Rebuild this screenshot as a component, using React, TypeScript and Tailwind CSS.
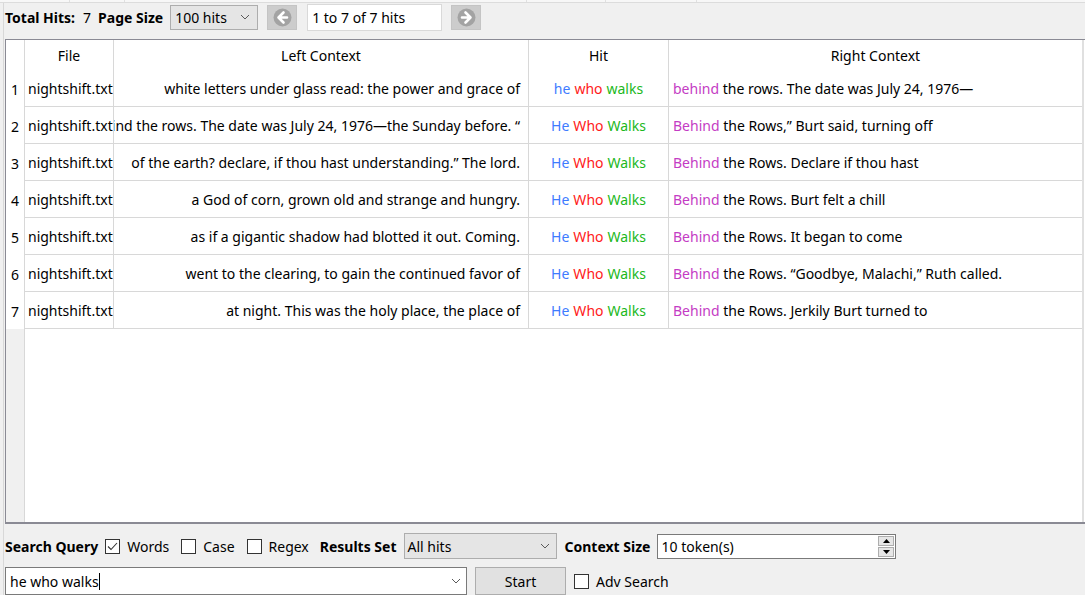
import React from 'react';

type Hit = {
  left: string;
  hit: [string, string, string];
  behind: string;
  right: string;
};

const hits: Hit[] = [
  {
    left: 'white letters under glass read: the power and grace of',
    hit: ['he', 'who', 'walks'],
    behind: 'behind',
    right: ' the rows. The date was July 24, 1976—',
  },
  {
    left: 'behind the rows. The date was July 24, 1976—the Sunday before. “',
    hit: ['He', 'Who', 'Walks'],
    behind: 'Behind',
    right: ' the Rows,” Burt said, turning off',
  },
  {
    left: 'of the earth? declare, if thou hast understanding.” The lord.',
    hit: ['He', 'Who', 'Walks'],
    behind: 'Behind',
    right: ' the Rows. Declare if thou hast',
  },
  {
    left: 'a God of corn, grown old and strange and hungry.',
    hit: ['He', 'Who', 'Walks'],
    behind: 'Behind',
    right: ' the Rows. Burt felt a chill',
  },
  {
    left: 'as if a gigantic shadow had blotted it out. Coming.',
    hit: ['He', 'Who', 'Walks'],
    behind: 'Behind',
    right: ' the Rows. It began to come',
  },
  {
    left: 'went to the clearing, to gain the continued favor of',
    hit: ['He', 'Who', 'Walks'],
    behind: 'Behind',
    right: ' the Rows. “Goodbye, Malachi,” Ruth called.',
  },
  {
    left: 'at night. This was the holy place, the place of',
    hit: ['He', 'Who', 'Walks'],
    behind: 'Behind',
    right: ' the Rows. Jerkily Burt turned to',
  },
];

const Chevron = () => (
  <svg width="10" height="6" viewBox="0 0 10 6" className="shrink-0">
    <path d="M1 1 L5 5 L9 1" fill="none" stroke="#5a5a5a" strokeWidth="1" />
  </svg>
);

const ArrowButton = ({ dir }: { dir: 'left' | 'right' }) => (
  <button className="w-[30px] h-[25px] bg-[#cccccc] border border-[#c4c4c4] flex items-center justify-center">
    <svg width="19" height="19" viewBox="0 0 19 19">
      <circle cx="9.5" cy="9.5" r="9" fill="#a3a3a3" />
      {dir === 'left' ? (
        <path d="M10.5 4.5 L5.5 9.5 L10.5 14.5 M5.8 9.5 H14" fill="none" stroke="#fff" strokeWidth="2.6" strokeLinecap="round" strokeLinejoin="round" />
      ) : (
        <path d="M8.5 4.5 L13.5 9.5 L8.5 14.5 M13.2 9.5 H5" fill="none" stroke="#fff" strokeWidth="2.6" strokeLinecap="round" strokeLinejoin="round" />
      )}
    </svg>
  </button>
);

const CheckBox = ({ checked, label }: { checked?: boolean; label: string }) => (
  <label className="flex items-center gap-[7px]">
    <span className="w-[15px] h-[15px] border border-[#333] bg-white flex items-center justify-center">
      {checked && (
        <svg width="11" height="9" viewBox="0 0 11 9">
          <path d="M1 4.5 L4 7.5 L10 1" fill="none" stroke="#333" strokeWidth="1.1" />
        </svg>
      )}
    </span>
    <span>{label}</span>
  </label>
);

const App: React.FC = () => {
  return (
    <div
      className="w-[1085px] h-[595px] bg-[#f0f0f0] text-[14px] text-black overflow-hidden flex flex-col"
      style={{ fontFamily: '"Noto Sans", "Open Sans", sans-serif' }}
    >
      {/* partially visible header strip above */}
      <div className="h-[3px] bg-[#f7f7f7] border-b border-[#dcdcdc] flex shrink-0">
        <div className="w-[70px] border-r border-[#e0e0e0]" />
        <div className="w-[55px] border-r border-[#e0e0e0]" />
        <div className="w-[402px] border-r border-[#e0e0e0]" />
        <div className="w-[79px] border-r border-[#e0e0e0]" />
        <div className="w-[91px] border-r border-[#e0e0e0]" />
      </div>

      <div className="flex-1 flex flex-col border-l border-[#d8d8d8] ml-[3px]">
        {/* toolbar */}
        <div className="h-[28px] flex items-center pl-[1px] shrink-0">
          <span className="font-bold">Total Hits:</span>
          <span className="ml-[8px]">7</span>
          <span className="font-bold ml-[7px]">Page Size</span>
          <div className="ml-[7px] w-[88px] h-[25px] bg-[#e5e5e5] border border-[#adadad] flex items-center justify-between pl-[4px] pr-[7px]">
            <span>100 hits</span>
            <Chevron />
          </div>
          <div className="ml-[9px]">
            <ArrowButton dir="left" />
          </div>
          <div className="ml-[10px] w-[135px] h-[27px] bg-white border border-[#d9d9d9] flex items-center pl-[4px]">
            1 to 7 of 7 hits
          </div>
          <div className="ml-[9px]">
            <ArrowButton dir="right" />
          </div>
        </div>

        {/* results table */}
        <div className="mt-[8px] ml-[1px] h-[485px] border-t border-l border-b-2 border-[#8a8a94] bg-white flex shrink-0">
          <div className="w-[19px] flex flex-col border-r border-[#d8d8d8]">
            <div className="h-[30px] bg-white" />
            {hits.map((_, i) => (
              <div key={i} className="h-[37px] bg-white flex items-center justify-center pt-[1px]">
                {i + 1}
              </div>
            ))}
            <div className="flex-1 bg-[#f0f0f0]" />
          </div>
          <div className="flex-1 flex flex-col border-r-2 border-[#e0e0e0] mr-[1px]">
            <div className="h-[30px] flex">
              <div className="w-[89px] border-r border-[#d8d8d8] flex items-center justify-center">File</div>
              <div className="w-[415px] border-r border-[#d8d8d8] flex items-center justify-center">Left Context</div>
              <div className="w-[140px] border-r border-[#d8d8d8] flex items-center justify-center">Hit</div>
              <div className="flex-1 flex items-center justify-center">Right Context</div>
            </div>
            {hits.map((h, i) => (
              <div key={i} className="h-[37px] flex border-b border-[#d8d8d8] whitespace-nowrap">
                <div className="w-[89px] border-r border-[#d8d8d8] flex items-center pl-[3px] overflow-hidden">
                  nightshift.txt
                </div>
                <div className="w-[415px] border-r border-[#d8d8d8] flex items-center justify-end pr-[8px] overflow-hidden">
                  <span className="shrink-0">{h.left}</span>
                </div>
                <div className="w-[140px] border-r border-[#d8d8d8] flex items-center justify-center">
                  <span className="text-[#3e7bff]">{h.hit[0]}</span>
                  <span className="text-[#ff1a1a] ml-[4px]">{h.hit[1]}</span>
                  <span className="text-[#1cb81c] ml-[4px]">{h.hit[2]}</span>
                </div>
                <div className="flex-1 flex items-center pl-[4px] overflow-hidden">
                  <span className="text-[#c43cc4]">{h.behind}</span>
                  <span className="whitespace-pre">{h.right}</span>
                </div>
              </div>
            ))}
            <div className="flex-1" />
          </div>
        </div>

        {/* search controls */}
        <div className="mt-[9px] pl-[1px] h-[26px] flex items-center shrink-0">
          <span className="font-bold">Search Query</span>
          <div className="ml-[7px]">
            <CheckBox checked label="Words" />
          </div>
          <div className="ml-[12px]">
            <CheckBox label="Case" />
          </div>
          <div className="ml-[12px]">
            <CheckBox label="Regex" />
          </div>
          <span className="font-bold ml-[11px]">Results Set</span>
          <div className="ml-[7px] w-[153px] h-[26px] bg-[#e5e5e5] border border-[#adadad] flex items-center justify-between pl-[3px] pr-[6px]">
            <span>All hits</span>
            <Chevron />
          </div>
          <span className="font-bold ml-[8px]">Context Size</span>
          <div className="ml-[7px] w-[239px] h-[25px] bg-white border border-[#7a7a7a] flex items-center justify-between pl-[3px] pr-[1px]">
            <span>10 token(s)</span>
            <div className="w-[16px] h-[21px] flex flex-col gap-[1px]">
              <div className="flex-1 bg-[#e6e6e6] border border-[#adadad] flex items-center justify-center">
                <svg width="7" height="4" viewBox="0 0 7 4"><path d="M0 4 L3.5 0 L7 4 Z" fill="#000" /></svg>
              </div>
              <div className="flex-1 bg-[#e6e6e6] border border-[#adadad] flex items-center justify-center">
                <svg width="7" height="4" viewBox="0 0 7 4"><path d="M0 0 L3.5 4 L7 0 Z" fill="#000" /></svg>
              </div>
            </div>
          </div>
        </div>

        <div className="mt-[8px] pl-[1px] flex items-center shrink-0">
          <div className="w-[462px] h-[28px] bg-white border border-[#7a7a7a] flex items-center justify-between pl-[4px] pr-[5px]">
            <span className="flex items-center">
              he who walks<span className="w-[1px] h-[17px] bg-black" />
            </span>
            <Chevron />
          </div>
          <button className="ml-[8px] w-[91px] h-[28px] bg-[#e1e1e1] border border-[#adadad] flex items-center justify-center">
            Start
          </button>
          <div className="ml-[8px]">
            <CheckBox label="Adv Search" />
          </div>
        </div>
      </div>
    </div>
  );
};

export default App;
